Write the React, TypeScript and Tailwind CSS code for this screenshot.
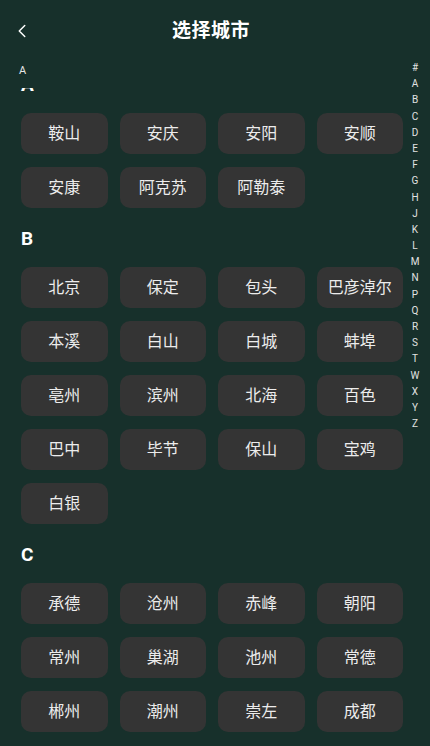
import { ChevronLeft } from "lucide-react";

const INDEX = ["#", "A", "B", "C", "D", "E", "F", "G", "H", "J", "K", "L", "M", "N", "P", "Q", "R", "S", "T", "W", "X", "Y", "Z"];

const SECTIONS: { letter: string; cities: string[] }[] = [
  { letter: "A", cities: ["鞍山", "安庆", "安阳", "安顺", "安康", "阿克苏", "阿勒泰"] },
  {
    letter: "B",
    cities: ["北京", "保定", "包头", "巴彦淖尔", "本溪", "白山", "白城", "蚌埠", "亳州", "滨州", "北海", "百色", "巴中", "毕节", "保山", "宝鸡", "白银"],
  },
  { letter: "C", cities: ["承德", "沧州", "赤峰", "朝阳", "常州", "巢湖", "池州", "常德", "郴州", "潮州", "崇左", "成都"] },
];

export default function App() {
  return (
    <div
      className="relative flex h-[746px] w-[430px] flex-col overflow-hidden bg-[#17302b] text-white"
      style={{ fontFamily: 'Roboto, "Noto Sans CJK SC", sans-serif' }}
    >
      {/* Header */}
      <div className="relative flex h-[62px] shrink-0 items-center justify-center pr-[8px]">
        <button className="absolute left-[11px] top-[20px] text-white">
          <ChevronLeft className="h-[22px] w-[22px]" strokeWidth={1.6} />
        </button>
        <h1 className="text-[19px] font-bold tracking-[0.5px]">选择城市</h1>
      </div>

      {/* Current letter */}
      <div className="h-[26px] shrink-0 pl-[19px] pt-[2px] text-[11px] leading-[14px] text-[#e6e6e6]">A</div>

      {/* City list */}
      <div className="flex-1 overflow-hidden pl-[21px] pr-[27px]">
        <div className="-mt-[34px]">
          {SECTIONS.map((s) => (
            <div key={s.letter}>
              <div className="flex h-[59px] items-center pt-[4px] text-[19px] font-bold">{s.letter}</div>
              <div className="grid grid-cols-4 gap-x-[12px] gap-y-[13px]">
                {s.cities.map((c) => (
                  <div
                    key={c}
                    className="flex h-[41px] items-center justify-center rounded-[10px] bg-[#343434] text-[16px] text-[#ececec]"
                  >
                    {c}
                  </div>
                ))}
              </div>
            </div>
          ))}
        </div>
      </div>

      {/* Index bar */}
      <div className="absolute right-[6px] top-[60px] flex w-[18px] flex-col items-center">
        {INDEX.map((l) => (
          <div key={l} className="h-[16.2px] text-[10px] leading-[16.2px] text-[#e2e2e2]">
            {l}
          </div>
        ))}
      </div>
    </div>
  );
}
